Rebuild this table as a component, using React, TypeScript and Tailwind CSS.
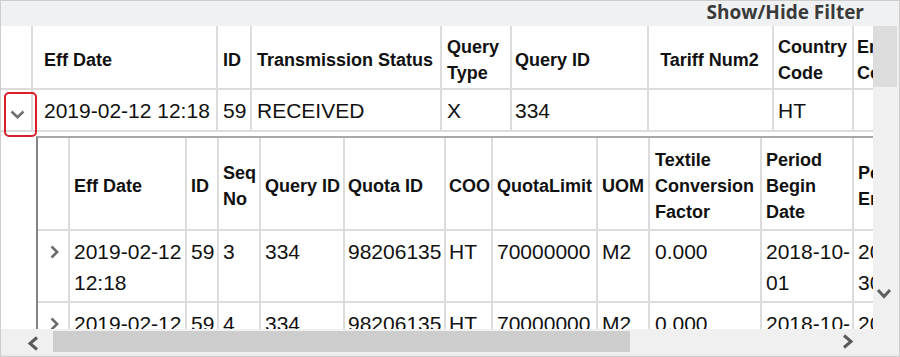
const outerCols = [
  { label: "Eff Date", cls: "w-[185px] pl-[11px]" },
  { label: "ID", cls: "w-[34px] pl-[5px]" },
  { label: "Transmission Status", cls: "w-[190px] pl-[5px]" },
  { label: "Query Type", cls: "w-[70px] pl-[5px]" },
  { label: "Query ID", cls: "w-[137px] pl-[3px]" },
  { label: "Tariff Num2", cls: "w-[125px] justify-center text-center" },
  { label: "Country Code", cls: "w-[80px] pl-[4px]" },
  { label: "Entry Code", cls: "w-[100px] pl-[3px]" },
];

const outerRow = ["2019-02-12 12:18", "59", "RECEIVED", "X", "334", "", "HT", ""];

const nestedCols = [
  { label: "Eff Date", cls: "w-[117px] pl-[4px]" },
  { label: "ID", cls: "w-[32px] pl-[4px]" },
  { label: "Seq No", cls: "w-[42px] pl-[4px]" },
  { label: "Query ID", cls: "w-[84px] pl-[4px]" },
  { label: "Quota ID", cls: "w-[101px] pl-[3px]" },
  { label: "COO", cls: "w-[47px] pl-[3px]" },
  { label: "QuotaLimit", cls: "w-[105px] pl-[4px]" },
  { label: "UOM", cls: "w-[52px] pl-[4px]" },
  { label: "Textile Conversion Factor", cls: "w-[112px] pl-[5px]" },
  { label: "Period Begin Date", cls: "w-[92px] pl-[4px]" },
  { label: "Period End Date", cls: "w-[92px] pl-[4px]" },
];

const quotaRows: (string | string[])[][] = [
  [["2019-02-12", "12:18"], "59", "3", "334", "98206135", "HT", "70000000", "M2", "0.000", ["2018-10-", "01"], ["2019-09-", "30"]],
  [["2019-02-12", "12:18"], "59", "4", "334", "98206135", "HT", "70000000", "M2", "0.000", ["2018-10-", "01"], ["2019-09-", "30"]],
];

function ChevronDown({ className = "" }: { className?: string }) {
  return (
    <svg width="15" height="9" viewBox="0 0 15 9" className={className}>
      <polyline points="1.5,1.5 7.5,7.2 13.5,1.5" fill="none" stroke="#707070" strokeWidth="2.6" />
    </svg>
  );
}

function ChevronRight() {
  return (
    <svg width="9" height="14" viewBox="0 0 9 14">
      <polyline points="1.5,1.5 7.2,7 1.5,12.5" fill="none" stroke="#6b6b6b" strokeWidth="2.6" />
    </svg>
  );
}

function ScrollArrow({ dir }: { dir: "left" | "right" | "down" }) {
  if (dir === "down") {
    return (
      <svg width="16" height="11" viewBox="0 0 16 11">
        <polyline points="2,2 8,8.5 14,2" fill="none" stroke="#606060" strokeWidth="3" />
      </svg>
    );
  }
  const pts = dir === "left" ? "10,1.5 3,7.5 10,13.5" : "2,1.5 9,7.5 2,13.5";
  return (
    <svg width="12" height="15" viewBox="0 0 12 15">
      <polyline points={pts} fill="none" stroke="#5a5a5a" strokeWidth="3" />
    </svg>
  );
}

function Cell({ value }: { value: string | string[] }) {
  if (Array.isArray(value)) {
    return (
      <>
        {value[0]}
        <br />
        {value[1]}
      </>
    );
  }
  return <>{value}</>;
}

export default function App() {
  return (
    <div className="w-[900px] h-[357px] bg-white border border-[#cdcdcd] flex flex-col font-['Liberation_Sans',Arial,sans-serif] text-[#111] overflow-hidden">
      <div className="h-[25px] shrink-0 bg-[#f0f1f3] flex justify-end pr-[35px]">
        <span className="font-['Open_Sans',sans-serif] font-bold text-[19px] leading-[23px] text-[#3a3a3a]">
          Show/Hide Filter
        </span>
      </div>

      <div className="h-[303px] shrink-0 flex">
        <div className="relative w-[872px] overflow-hidden">
          {/* master header */}
          <div className="flex h-[64px] w-max border-b-2 border-[#dcdcdc] text-[18px] font-bold leading-[26px]">
            <div className="w-[32px] shrink-0 border-r-2 border-[#dcdcdc]" />
            {outerCols.map((c) => (
              <div key={c.label} className={`flex items-center shrink-0 border-r-2 border-[#dcdcdc] pr-[2px] pt-[5px] ${c.cls}`}>
                {c.label}
              </div>
            ))}
          </div>

          {/* master row */}
          <div className="flex h-[42px] w-max border-b-2 border-[#dcdcdc] text-[21px] leading-[31px]">
            <div className="w-[32px] shrink-0 border-r-2 border-[#dcdcdc] pl-[9px] pt-[20px]">
              <ChevronDown className="block" />
            </div>
            {outerRow.map((v, i) => (
              <div key={i} className={`shrink-0 whitespace-nowrap border-r-2 border-[#dcdcdc] pt-[5px] ${outerCols[i].cls}`}>
                {v}
              </div>
            ))}
          </div>

          {/* detail: quotas */}
          <div className="pl-[35px] pt-[4px]">
            <div className="w-max border-l-2 border-t-2 border-l-[#858585] border-t-[#a8a8a8]">
              <div className="flex h-[93px] border-b-2 border-[#dcdcdc] text-[18px] font-bold leading-[26px]">
                <div className="w-[32px] shrink-0 border-r-2 border-[#dcdcdc]" />
                {nestedCols.map((c) => (
                  <div key={c.label} className={`flex items-center shrink-0 border-r-2 border-[#dcdcdc] pr-[2px] pt-[4px] ${c.cls}`}>
                    <span>{c.label}</span>
                  </div>
                ))}
              </div>
              {quotaRows.map((row, r) => (
                <div key={r} className="flex h-[72px] border-b-2 border-[#dcdcdc] text-[21px] leading-[31px]">
                  <div className="w-[32px] shrink-0 border-r-2 border-[#dcdcdc] pl-[12px] pt-[14px]">
                    <ChevronRight />
                  </div>
                  {row.map((v, i) => (
                    <div key={i} className={`shrink-0 overflow-hidden whitespace-nowrap border-r-2 border-[#dcdcdc] pt-[5px] ${nestedCols[i].cls}`}>
                      <Cell value={v} />
                    </div>
                  ))}
                </div>
              ))}
            </div>
          </div>

          {/* focus ring on expand toggle */}
          <div className="absolute left-[3px] top-[66px] w-[33px] h-[45px] border-2 border-[#d9202a] rounded-[5px]" />
        </div>

        <div className="w-[26px] shrink-0 bg-[#f0f0f0] flex flex-col">
          <div className="h-[61px] w-[24px] bg-[#dcdcdc]" />
          <div className="flex-1" />
          <div className="pl-[3px]">
            <ScrollArrow dir="down" />
          </div>
          <div className="h-[30px]" />
        </div>
      </div>

      <div className="h-[25px] shrink-0 bg-[#f0f0f0] flex items-center">
        <div className="ml-[26px] mt-[3px] flex">
          <ScrollArrow dir="left" />
        </div>
        <div className="ml-[14px] w-[577px] h-[21px] bg-[#cdcdcd]" />
        <div className="flex-1" />
        <div className="mr-[45px] flex">
          <ScrollArrow dir="right" />
        </div>
      </div>
      <div className="flex-1 bg-[#ebebeb]" />
    </div>
  );
}
